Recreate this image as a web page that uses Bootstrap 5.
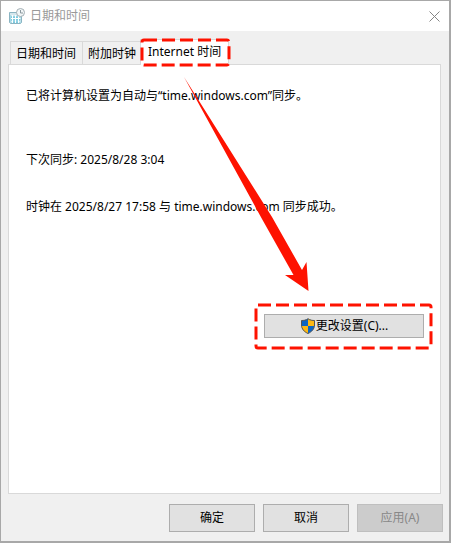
<!DOCTYPE html>
<html lang="zh-CN">
<head>
<meta charset="utf-8">
<meta name="viewport" content="width=device-width, initial-scale=1">
<title>日期和时间</title>
<link rel="stylesheet" href="https://cdn.jsdelivr.net/npm/bootstrap@5.3.0/dist/css/bootstrap.min.css">
<style>
body { font-family: "Noto Sans", "Noto Sans CJK SC", sans-serif; font-size: 12px; line-height: 16px; color: #000; background: #f0f0f0; }
.dialog { border: 1px solid #a8a8a8; border-right-width: 2px; border-bottom-width: 2px; }
.titlebar { height: 30px; padding: 0 9px 0 8px; color: #999; }
.titlebar h1 { font-size: 12px; line-height: 16px; padding-left: 5px; }
.close-btn { line-height: 0; }
.tab-area { padding: 0 8px 0 7px; }
.dialog .nav-tabs { padding: 8px 0 0 2px; border: 0; }
.dialog .nav-tabs .nav-link { height: 23px; padding: 2px 6px 0 5px; margin: 0 -1px 0 0; border: 1px solid #d9d9d9; border-bottom: 0; border-radius: 0; background: #f0f0f0; color: #000; white-space: nowrap; }
.dialog .nav-tabs .nav-link.active { height: 26px; padding: 0 7px 2px; margin: 0 0 -1px -2px; background: #fff; position: relative; z-index: 1; }
.pane { border: 1px solid #d9d9d9; background: #fff; padding: 23px 16px 23px 17px; }
.pane p { margin: 0; }
.line-next { padding-top: 48px; }
.line-result { padding-top: 31px; }
.action { margin-top: 99px; }
.dialog .btn { --bs-btn-border-radius: 0; --bs-btn-font-size: 12px; --bs-btn-line-height: 16px; --bs-btn-padding-x: 0; --bs-btn-padding-y: 0; --bs-btn-bg: #e1e1e1; --bs-btn-border-color: #adadad; --bs-btn-color: #000; --bs-btn-disabled-bg: #ccc; --bs-btn-disabled-border-color: #bfbfbf; --bs-btn-disabled-color: #888; --bs-btn-disabled-opacity: 1; --bs-btn-hover-bg: #e5f1fb; --bs-btn-hover-border-color: #0078d7; --bs-btn-hover-color: #000; }
.btn-change { width: 160px; height: 24px; }
.footer-btn { width: 86px; height: 28px; }
.footer-bar { padding: 10px 6px 9px; gap: 8px; }
.mark-box { position: absolute; pointer-events: none; overflow: visible; fill: none; stroke: #fe1200; stroke-width: 3; stroke-dasharray: 13 5; }
.mark-tab { left: 0; top: -1px; }
.mark-action { left: -9px; top: -10px; }
.arrow { position: absolute; left: 175px; top: 12px; pointer-events: none; }
</style>
<script src="https://cdn.jsdelivr.net/npm/bootstrap@5.3.0/dist/js/bootstrap.bundle.min.js"></script>
</head>
<body>
<main class="dialog min-vh-100 d-flex flex-column">
  <header class="titlebar bg-white d-flex align-items-center">
    <svg width="16" height="16" viewBox="0 0 16 16" aria-hidden="true">
      <path d="M.5 4.500h12v10l-1 1H1.500l-1-1z" fill="#a9d9e5" stroke="#8bb4c2"/>
      <path d="M1 5h11v2H1z" fill="#d5e6ec"/>
      <path d="M2 8h9.500M2 10.500h9.500M2 13h9.500M3.500 7v8M6.500 7v8M9.500 7v8" stroke="#fff" fill="none"/>
      <path d="M2 9h1M4 9h2M7 9h2M2 12h1M4 12h2M7 12h2M10 12h1M4 14h2M7 14h2" stroke="#51b9d7"/>
      <circle cx="11.500" cy="4.500" r="4" fill="#f2f6f7" stroke="#a2aeb4"/>
      <path d="M11.500 2v3h2.500" fill="none" stroke="#8b989e"/>
    </svg>
    <h1 class="m-0 fw-normal">日期和时间</h1>
    <button type="button" class="close-btn border-0 bg-transparent p-0 ms-auto" aria-label="关闭">
      <svg width="11" height="11" viewBox="0 0 11 11" aria-hidden="true"><path d="M.5.5l10 10M10.500.5l-10 10" stroke="#858585" fill="none"/></svg>
    </button>
  </header>
  <div class="tab-area d-flex flex-column flex-grow-1">
    <div class="nav nav-tabs align-items-end flex-nowrap" role="tablist">
      <button type="button" class="nav-link" role="tab" aria-selected="false">日期和时间</button>
      <button type="button" class="nav-link" role="tab" aria-selected="false">附加时钟</button>
      <button type="button" class="nav-link active" role="tab" aria-selected="true" aria-controls="pane-net">Internet 时间
        <svg class="mark-box mark-tab" width="90" height="27" aria-hidden="true"><rect x="1" y="1" width="87" height="25" rx="2"/></svg>
      </button>
    </div>
    <section id="pane-net" class="pane flex-grow-1 position-relative" role="tabpanel">
      <p>已将计算机设置为自动与“time.windows.com”同步。</p>
      <p class="line-next">下次同步: 2025/8/28 3:04</p>
      <p class="line-result">时钟在 2025/8/27 17:58 与 time.windows.com 同步成功。</p>
      <div class="action d-flex justify-content-end">
        <div class="position-relative">
          <button type="button" class="btn btn-change d-flex align-items-center justify-content-center">
            <svg width="16" height="16" viewBox="0 0 16 16" aria-hidden="true">
              <path d="M8 .5C6 2 3.500 2.500 1.500 2.500V7c0 4 3 7 6.500 8.500C11.500 14 14.500 11 14.500 7V2.500C12.500 2.500 10 2 8 .5z" fill="#0b65c4"/>
              <path d="M8 .5c2 1.500 4.500 2 6.500 2V8H8zM8 8v7.500C4.500 14 1.700 11.500 1.500 8z" fill="#fdb813"/>
              <path d="M8 .8C6 2.300 3.500 2.500 1.500 2.500V7c0 4 3 7 6.500 8.500C11.500 14 14.500 11 14.500 7V2.500C12.500 2.500 10 2.300 8 .8z" fill="none" stroke="#555"/>
            </svg>更改设置(C)...
          </button>
          <svg class="mark-box mark-action" width="178" height="46" aria-hidden="true"><rect x="1" y="1" width="175" height="43" rx="2"/></svg>
        </div>
      </div>
      <svg class="arrow" width="130" height="220" aria-hidden="true"><path d="M0 0L88 140 118 193 122.500 185 124.500 214 101 198 109.500 198 78 142z" fill="#fe1200"/></svg>
    </section>
  </div>
  <footer class="footer-bar d-flex justify-content-end">
    <button type="button" class="btn footer-btn">确定</button>
    <button type="button" class="btn footer-btn">取消</button>
    <button type="button" class="btn footer-btn" disabled>应用(A)</button>
  </footer>
</main>
</body>
</html>
